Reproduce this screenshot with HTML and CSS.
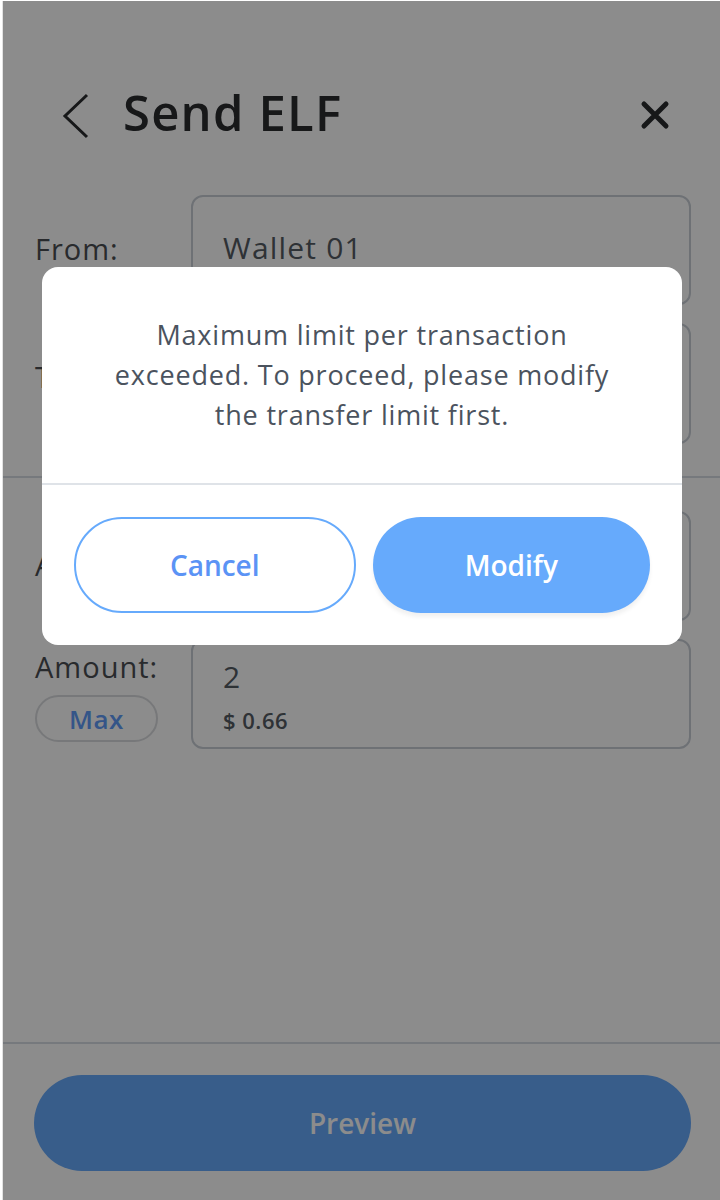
FILE: index.html
```html
<!DOCTYPE html>
<html lang="en">
<head>
<meta charset="utf-8">
<title>Send ELF</title>
<link rel="stylesheet" href="styles.css">
</head>
<body>
<div class="frame">
  <header class="header">
    <svg class="back" width="30" height="46" viewBox="0 0 30 46"><path d="M25 2 L3 23 L25 44" fill="none" stroke="#2a2c2f" stroke-width="3"/></svg>
    <h1 class="title">Send ELF</h1>
    <svg class="close" width="30" height="30" viewBox="0 0 30 30"><path d="M4 4 L26 26 M26 4 L4 26" fill="none" stroke="#2a2c2f" stroke-width="5" stroke-linecap="round"/></svg>
  </header>

  <section class="group">
    <div class="row">
      <div class="label">From:</div>
      <div class="box box-from"><span class="val">Wallet 01</span></div>
    </div>
    <div class="row">
      <div class="label">To:</div>
      <div class="box box-to"></div>
    </div>
  </section>

  <section class="group group-2">
    <div class="row">
      <div class="label">Asset:</div>
      <div class="box box-asset"></div>
    </div>
    <div class="row">
      <div class="label-col">
        <div class="label">Amount:</div>
        <button class="max">Max</button>
      </div>
      <div class="box box-amount">
        <span class="val">2</span>
        <span class="usd">$ 0.66</span>
      </div>
    </div>
  </section>

  <div class="spacer"></div>

  <footer class="footer">
    <button class="preview">Preview</button>
  </footer>

  <div class="overlay"></div>
  <div class="modal">
    <p class="msg">Maximum limit per transaction<br>exceeded. To proceed, please modify<br>the transfer limit first.</p>
    <div class="actions">
      <button class="btn btn-cancel">Cancel</button>
      <button class="btn btn-modify">Modify</button>
    </div>
  </div>
</div>
</body>
</html>
```

FILE: styles.css
```css
* { box-sizing: border-box; }
html, body { margin: 0; padding: 0; background: #ffffff; }
body { font-family: "Open Sans", "Noto Sans", sans-serif; }

.frame {
  position: relative;
  margin: 1px 0 0 2px;
  width: 718px;
  height: 1199px;
  background: #ffffff;
  border-left: 1px solid #e2e2e2;
  display: flex;
  flex-direction: column;
  overflow: hidden;
}

.header {
  height: 194px;
  display: flex;
  align-items: flex-start;
  padding: 91px 50px 0 59px;
}
.back { margin-top: 1px; }
.title {
  margin: -4px 0 0 31px;
  font-size: 49px;
  font-weight: 600;
  letter-spacing: 1.2px;
  color: #2a2c2f;
  line-height: 48px;
  flex: 1;
}
.close { margin-top: 8px; }

.group {
  display: flex;
  flex-direction: column;
  gap: 18px;
  padding: 0 29px 32px 32px;
  border-bottom: 2px solid #d8dde3;
}
.group-2 { border-bottom: none; padding-top: 33px; }

.row { display: flex; align-items: flex-start; }
.label {
  width: 156px;
  font-size: 29px;
  font-weight: 500;
  letter-spacing: 1px;
  color: #4a4d52;
  padding-top: 36px;
  line-height: 36px;
}
.label-col { width: 156px; display: flex; flex-direction: column; }
.label-col .label { padding-top: 10px; }
.max {
  margin-top: 10px;
  width: 123px;
  height: 47px;
  border: 2px solid #d9dbde;
  border-radius: 24px;
  background: #fff;
  font-family: inherit;
  font-size: 26px;
  font-weight: 600;
  letter-spacing: 0.5px;
  color: #5f9bf8;
}

.box {
  flex: 1;
  border: 2px solid #c8ced6;
  border-radius: 12px;
  padding: 0 30px;
  display: flex;
  flex-direction: column;
}
.box-from { height: 110px; justify-content: center; }
.box-to { height: 121px; }
.box-asset { height: 110px; }
.box-amount { height: 110px; padding-top: 16px; }
.val { font-size: 30px; font-weight: 500; letter-spacing: 1.2px; color: #555b63; line-height: 40px; }
.box-from .val { margin-top: -4px; }
.usd { font-size: 22px; font-weight: 600; letter-spacing: 0.5px; color: #555b63; margin-top: 8px; }

.spacer { flex: 1; }

.footer {
  border-top: 2px solid #d8dde3;
  padding: 31px 29px 29px 31px;
}
.preview {
  width: 100%;
  height: 96px;
  border: none;
  border-radius: 48px;
  background: #66a9fb;
  color: #ffffff;
  font-family: inherit;
  font-size: 28px;
  font-weight: 600;
}

.overlay {
  position: absolute;
  inset: 0;
  background: rgba(0, 0, 0, 0.45);
}

.modal {
  position: absolute;
  top: 266px;
  left: 39px;
  width: 640px;
  background: #ffffff;
  border-radius: 16px;
}
.msg {
  margin: 0;
  padding: 48px 10px 48px;
  text-align: center;
  font-size: 27px;
  letter-spacing: 0.8px;
  line-height: 40px;
  font-weight: 500;
  color: #4b535e;
  border-bottom: 2px solid #dfe3e8;
}
.actions {
  display: flex;
  gap: 17px;
  padding: 32px 32px 32px;
}
.btn {
  flex: 1 1 0;
  width: 0;
  height: 96px;
  border-radius: 48px;
  font-family: inherit;
  font-size: 28px;
  font-weight: 600;
}
.btn-cancel {
  background: #ffffff;
  border: 2px solid #66aafc;
  color: #5b93f5;
}
.btn-modify {
  background: #66aafc;
  border: none;
  color: #ffffff;
  box-shadow: 0 4px 4px rgba(0, 0, 0, 0.06);
}
```
